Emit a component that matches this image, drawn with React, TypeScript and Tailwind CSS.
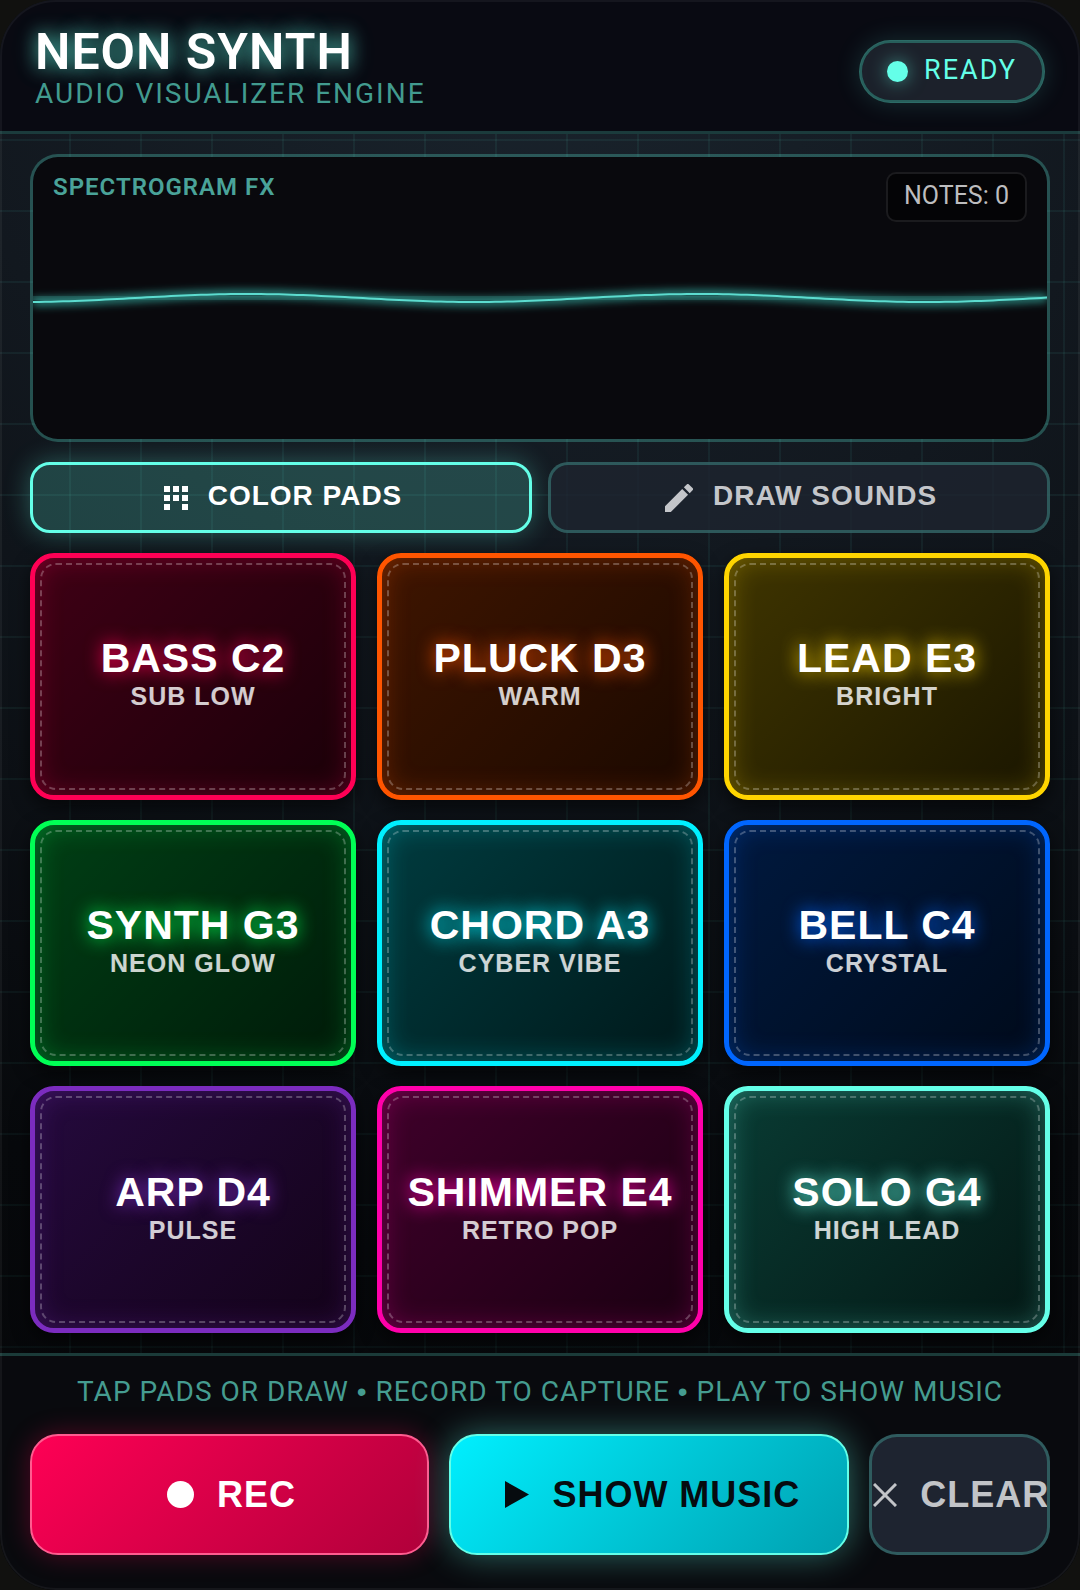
import { useState } from "react";
import type { ReactNode } from "react";

type Pad = { name: string; sub: string; look: string };

const pads: Pad[] = [
  {
    name: "BASS C2",
    sub: "SUB LOW",
    look: "border-[#ff0055] bg-linear-135 from-[#ff0055]/25 to-[#ff0055]/10 [--glow:#ff0055]",
  },
  {
    name: "PLUCK D3",
    sub: "WARM",
    look: "border-[#ff5500] bg-linear-135 from-[#ff5500]/25 to-[#ff5500]/10 [--glow:#ff5500]",
  },
  {
    name: "LEAD E3",
    sub: "BRIGHT",
    look: "border-[#ffd500] bg-linear-135 from-[#ffd500]/25 to-[#ffd500]/10 [--glow:#ffd500]",
  },
  {
    name: "SYNTH G3",
    sub: "NEON GLOW",
    look: "border-[#00ff55] bg-linear-135 from-[#00ff55]/25 to-[#00ff55]/10 [--glow:#00ff55]",
  },
  {
    name: "CHORD A3",
    sub: "CYBER VIBE",
    look: "border-[#00f0ff] bg-linear-135 from-[#00f0ff]/25 to-[#00f0ff]/10 [--glow:#00f0ff]",
  },
  {
    name: "BELL C4",
    sub: "CRYSTAL",
    look: "border-[#0066ff] bg-linear-135 from-[#0066ff]/25 to-[#0066ff]/10 [--glow:#0066ff]",
  },
  {
    name: "ARP D4",
    sub: "PULSE",
    look: "border-[#7b2cbf] bg-linear-135 from-[#250a3e] to-[#130318] [--glow:#7b2cbf]",
  },
  {
    name: "SHIMMER E4",
    sub: "RETRO POP",
    look: "border-[#ff00aa] bg-linear-135 from-[#ff00aa]/25 to-[#ff00aa]/10 [--glow:#ff00aa]",
  },
  {
    name: "SOLO G4",
    sub: "HIGH LEAD",
    look: "border-[#64ffe8] bg-linear-135 from-[#093c34] to-[#041714] [--glow:#64ffe8]",
  },
];

const wavePath = Array.from({ length: 170 }, (_, i) => {
  const x = i * 6;
  const y = 141 - 4 * Math.cos((2 * Math.PI * (x - 215)) / 452);
  return `${i === 0 ? "M" : "L"}${x} ${y.toFixed(2)}`;
}).join(" ");

function Bullet() {
  return <span className="font-['Liberation_Sans',sans-serif]">•</span>;
}

function GridIcon() {
  return (
    <svg viewBox="0 0 24 24" className="size-6 shrink-0" fill="currentColor" aria-hidden="true">
      <path d="M0 0h6v6H0zM9 0h6v6H9zM18 0h6v6h-6zM0 9h6v6H0zM9 9h6v6H9zM18 9h6v6h-6zM0 18h6v6H0zM18 18h6v6h-6z" />
    </svg>
  );
}

function PencilIcon() {
  return (
    <svg viewBox="3 3 18 18" className="size-7 shrink-0" fill="currentColor" aria-hidden="true">
      <path d="M3 17.250V21h3.750L17.810 9.940l-3.750-3.750L3 17.250zM20.710 7.040a1 1 0 0 0 0-1.410l-2.340-2.340a1 1 0 0 0-1.410 0l-1.830 1.830 3.750 3.750 1.830-1.830z" />
    </svg>
  );
}

function Tab({ active, onClick, children }: { active: boolean; onClick: () => void; children: ReactNode }) {
  return (
    <button
      type="button"
      aria-pressed={active}
      onClick={onClick}
      className={
        "flex h-[71px] items-center justify-center gap-5 rounded-[20px] border-[3px] pl-1 text-[28px] font-bold tracking-[1px] " +
        (active
          ? "border-[#64ffe8] bg-[#64ffe8]/20 text-white shadow-[0_0_26px_rgba(100,255,232,0.3)]"
          : "border-[#64ffe8]/25 bg-[#1e2430]/80 text-[#c4c6ca]")
      }
    >
      {children}
    </button>
  );
}

export default function App() {
  const [tab, setTab] = useState<"pads" | "draw">("pads");

  return (
    <div className="min-h-screen bg-[#11110f] font-['Liberation_Sans',Arial,sans-serif] text-white">
      <div className="relative flex min-h-screen flex-col overflow-hidden rounded-[56px] bg-[radial-gradient(circle_at_50%_0%,#1a242d_0%,#12181f_35%,#07090c_75%,#050608_100%)]">
        <div className="pointer-events-none absolute inset-0 bg-[linear-gradient(to_right,rgba(100,255,232,0.06)_2px,transparent_2px),linear-gradient(to_bottom,rgba(100,255,232,0.06)_2px,transparent_2px)] bg-[size:71px_71px] bg-[position:-2px_68px] [mask-image:linear-gradient(to_bottom,black_30%,rgba(0,0,0,0.6))]" />

        <header className="relative flex h-[134px] items-center justify-between border-b-[3px] border-[#64ffe8]/20 bg-[#090a12] px-[35px] font-['Roboto','Liberation_Sans',sans-serif]">
          <div className="pt-1">
            <h1 className="text-[50px] leading-[52px] font-semibold tracking-[1px] [text-shadow:0_0_18px_rgba(100,255,232,0.6),0_0_26px_rgba(100,255,232,0.3)]">
              NEON SYNTH
            </h1>
            <p className="text-[28px] leading-[32px] tracking-[2px] text-[#429b8f]">AUDIO VISUALIZER ENGINE</p>
          </div>
          <div className="mt-3 flex h-[63px] items-center gap-4 rounded-full border-[3px] border-[#64ffe8]/35 bg-[#1c212b] bg-clip-padding px-[25px] shadow-[0_0_26px_rgba(100,255,232,0.15)]">
            <span className="size-[21px] rounded-full bg-[#64ffe8] shadow-[0_0_18px_rgba(100,255,232,0.5)]" />
            <span className="pb-1 text-[27px] leading-8 tracking-[2px] text-[#64ffe8]">READY</span>
          </div>
        </header>

        <main className="relative flex flex-1 flex-col gap-5 px-[30px] py-5">
          <section
            aria-label="Spectrogram"
            className="relative h-[288px] overflow-hidden rounded-[28px] border-[3px] border-[#64ffe8]/25 bg-[#09090d] bg-clip-padding font-['Roboto','Liberation_Sans',sans-serif]"
          >
            <svg viewBox="0 0 1014 282" preserveAspectRatio="none" className="absolute inset-0 size-full" aria-hidden="true">
              <defs>
                <filter id="wave-glow" x="-5%" y="-400%" width="110%" height="900%">
                  <feGaussianBlur stdDeviation="4" />
                </filter>
              </defs>
              <path d="M0 141H1014" stroke="#64ffe8" strokeOpacity="0.15" strokeWidth="4" />
              <path d={wavePath} fill="none" stroke="#3fd6c6" strokeOpacity="0.7" strokeWidth="7" filter="url(#wave-glow)" />
              <path d={wavePath} fill="none" stroke="#5cdccf" strokeWidth="2" />
            </svg>
            <div className="relative flex items-start justify-between px-5 pt-[15px]">
              <h2 className="text-[24px] leading-[30px] font-semibold tracking-[1px] text-[#4aa399]">SPECTROGRAM FX</h2>
              <div className="flex h-[50px] items-center rounded-[10px] border-2 border-[#1b1b1e] bg-[#040406] px-4 pb-0.5 text-[25px] text-[#bdbdbf]">
                NOTES: 0
              </div>
            </div>
          </section>

          <div className="grid grid-cols-2 gap-4">
            <Tab active={tab === "pads"} onClick={() => setTab("pads")}>
              <GridIcon />
              <span className="pb-1">COLOR PADS</span>
            </Tab>
            <Tab active={tab === "draw"} onClick={() => setTab("draw")}>
              <PencilIcon />
              <span className="pb-1">DRAW SOUNDS</span>
            </Tab>
          </div>

          <div className="grid flex-1 auto-rows-fr grid-cols-3 gap-x-[21px] gap-y-5">
            {pads.map((pad) => (
              <div key={pad.name} className="flex rounded-3xl bg-black shadow-[0_7px_18px_rgba(0,0,0,0.6)]">
                <button
                  type="button"
                  className={
                    "relative flex flex-1 flex-col items-center justify-center rounded-3xl border-[5px] bg-origin-border pb-2 shadow-[inset_0_0_28px_color-mix(in_srgb,var(--glow)_30%,transparent)] " +
                    pad.look
                  }
                >
                  <span className="absolute inset-[5px] rounded-2xl border-2 border-dashed border-white/25" />
                  <span className="text-[41px] leading-[48px] font-bold tracking-[1px] whitespace-nowrap [text-shadow:0_0_18px_var(--glow)]">
                    {pad.name}
                  </span>
                  <span className="text-[25px] leading-[28px] font-bold tracking-[1px] text-white/80">{pad.sub}</span>
                </button>
              </div>
            ))}
          </div>
        </main>

        <footer className="relative border-t-[3px] border-[#64ffe8]/20 bg-[#090a0e] px-[30px] pt-5 pb-[35px]">
          <p className="mb-[26px] text-center font-['Roboto','Liberation_Sans',sans-serif] text-[28px] leading-8 tracking-[1px] text-[#459c90]">
            TAP PADS OR DRAW <Bullet /> RECORD TO CAPTURE <Bullet /> PLAY TO SHOW MUSIC
          </p>
          <div className="grid grid-cols-[11fr_11fr_5fr] gap-5 text-[36px] font-bold tracking-[1px]">
            <button
              type="button"
              className="flex h-[121px] items-center justify-center gap-[23px] rounded-[28px] border-2 border-[#ff5c90] bg-linear-135 from-[#ff0055] to-[#b0003a] bg-origin-border pl-1 shadow-[0_0_26px_rgba(255,0,85,0.3)]"
            >
              <svg viewBox="0 0 27 27" className="size-[27px] shrink-0" aria-hidden="true">
                <circle cx="13.5" cy="13.5" r="13.5" fill="currentColor" />
              </svg>
              REC
            </button>
            <button
              type="button"
              className="flex h-[121px] items-center justify-center gap-[23px] rounded-[28px] border-2 border-[#64ffe8] bg-linear-135 from-[#00f0ff] to-[#00a0b0] bg-origin-border pl-2 text-[#060b0f] shadow-[0_0_35px_rgba(100,255,232,0.4)]"
            >
              <svg viewBox="0 0 24 27" className="h-[27px] w-6 shrink-0" aria-hidden="true">
                <path d="M0 0L24 13.500L0 27Z" fill="currentColor" />
              </svg>
              SHOW MUSIC
            </button>
            <button
              type="button"
              className="flex h-[121px] min-w-0 items-center justify-center gap-[23px] overflow-hidden rounded-[28px] border-[3px] border-[#64ffe8]/25 bg-[#1e2430] pl-1 text-[#c2c4c8]"
            >
              <svg viewBox="0 0 24 24" className="size-6 shrink-0" aria-hidden="true">
                <path d="M1 1L23 23M23 1L1 23" stroke="currentColor" strokeWidth="3" fill="none" />
              </svg>
              CLEAR
            </button>
          </div>
        </footer>
        <div className="pointer-events-none absolute inset-0 rounded-[56px] border-2 border-white/5" />
      </div>
    </div>
  );
}
